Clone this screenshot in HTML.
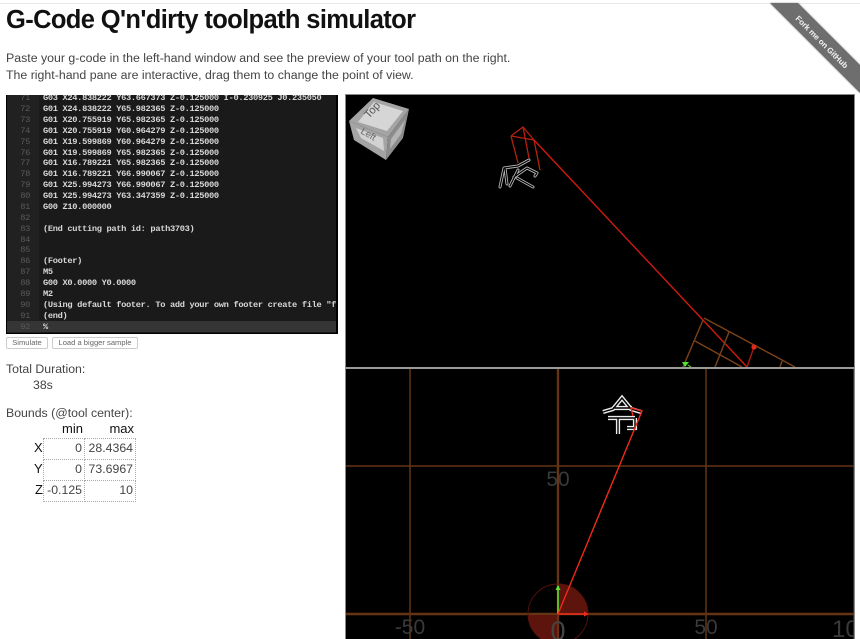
<!DOCTYPE html>
<html><head><meta charset="utf-8"><title>G-Code Q'n'dirty toolpath simulator</title>
<style>
html,body{margin:0;padding:0;background:#fff;width:860px;height:639px;overflow:hidden}
body{position:relative;font-family:"Liberation Sans","Noto Sans CJK JP",sans-serif;color:#333;filter:blur(.3px)}
#top{position:absolute;left:0;top:3px;width:860px;height:1px;background:#e8e8e8}
h1{position:absolute;left:6px;top:5px;margin:0;font-size:25.5px;letter-spacing:-.63px;line-height:30px;font-weight:bold;color:#111;white-space:nowrap}
p{position:absolute;left:6px;top:50px;margin:0;font-size:12.35px;line-height:17px;white-space:nowrap;color:#444}
#ed{position:absolute;left:6px;top:95px;width:332px;height:239px;background:#1a1a1a;overflow:hidden;box-sizing:border-box;border:1px solid #000;border-width:0 2px 1px 1px;font-family:"Liberation Mono",monospace;font-size:8.7px;letter-spacing:-.33px;font-weight:bold}
#gut{position:absolute;left:0;top:0;width:32px;height:239px;background:#212121}
#act{position:absolute;left:0;top:226px;width:330px;height:11px;background:#353535}
.l{position:absolute;left:0;height:11px;line-height:11px;white-space:pre}
.l i{position:absolute;left:0;width:23px;text-align:right;font-style:normal;font-weight:normal;color:#5a5a5a}
.l b{position:absolute;left:36px;color:#d8d8d8;font-weight:bold}
.btn{position:absolute;top:337px;height:12px;box-sizing:border-box;border:1px solid #ccc;border-radius:2px;font-size:7.6px;line-height:10px;text-align:center;color:#666;background:#fff}
.t{position:absolute;white-space:nowrap;font-size:12.3px;line-height:16px;color:#444}
.k{position:absolute;color:#111;font-size:13px;line-height:16px}
.c{position:absolute;box-sizing:border-box;border:1px dotted #aaa;font-size:12.3px;line-height:19px;text-align:right;padding-right:2px;color:#444}
svg{position:absolute;left:0;top:0}
</style></head><body>
<div id="top"></div>
<h1>G-Code Q'n'dirty toolpath simulator</h1>
<p>Paste your g-code in the left-hand window and see the preview of your tool path on the right.<br>The right-hand pane are interactive, drag them to change the point of view.</p>
<div id="ed"><div id="gut"></div><div id="act"></div>
<div class="l" style="top:-2px"><i>71</i><b>G03 X24.838222 Y63.667373 Z-0.125000 I-0.230925 J0.235050</b></div>
<div class="l" style="top:9px"><i>72</i><b>G01 X24.838222 Y65.982365 Z-0.125000</b></div>
<div class="l" style="top:20px"><i>73</i><b>G01 X20.755919 Y65.982365 Z-0.125000</b></div>
<div class="l" style="top:31px"><i>74</i><b>G01 X20.755919 Y60.964279 Z-0.125000</b></div>
<div class="l" style="top:41.6px"><i>75</i><b>G01 X19.599869 Y60.964279 Z-0.125000</b></div>
<div class="l" style="top:52.5px"><i>76</i><b>G01 X19.599869 Y65.982365 Z-0.125000</b></div>
<div class="l" style="top:63.4px"><i>77</i><b>G01 X16.789221 Y65.982365 Z-0.125000</b></div>
<div class="l" style="top:74.2px"><i>78</i><b>G01 X16.789221 Y66.990067 Z-0.125000</b></div>
<div class="l" style="top:85.1px"><i>79</i><b>G01 X25.994273 Y66.990067 Z-0.125000</b></div>
<div class="l" style="top:96px"><i>80</i><b>G01 X25.994273 Y63.347359 Z-0.125000</b></div>
<div class="l" style="top:106.9px"><i>81</i><b>G00 Z10.000000</b></div>
<div class="l" style="top:117.8px"><i>82</i></div>
<div class="l" style="top:128.6px"><i>83</i><b>(End cutting path id: path3703)</b></div>
<div class="l" style="top:139.5px"><i>84</i></div>
<div class="l" style="top:150.4px"><i>85</i></div>
<div class="l" style="top:161.3px"><i>86</i><b>(Footer)</b></div>
<div class="l" style="top:172.2px"><i>87</i><b>M5</b></div>
<div class="l" style="top:183px"><i>88</i><b>G00 X0.0000 Y0.0000</b></div>
<div class="l" style="top:193.9px"><i>89</i><b>M2</b></div>
<div class="l" style="top:204.8px"><i>90</i><b>(Using default footer. To add your own footer create file "f</b></div>
<div class="l" style="top:215.7px"><i>91</i><b>(end)</b></div>
<div class="l" style="top:226.5px"><i>92</i><b>%</b></div>
</div>
<div class="btn" style="left:6px;width:42px">Simulate</div>
<div class="btn" style="left:52px;width:86px">Load a bigger sample</div>
<div class="t" style="left:6px;top:361px">Total Duration:</div>
<div class="t" style="left:33px;top:377px">38s</div>
<div class="t" style="left:6px;top:405px">Bounds (@tool center):</div>
<div class="k" style="left:43px;width:40px;top:421px;text-align:right">min</div>
<div class="k" style="left:84px;width:50px;top:421px;text-align:right">max</div>
<div class="k" style="left:34px;top:440px">X</div>
<div class="k" style="left:34px;top:461px">Y</div>
<div class="k" style="left:35px;top:482px">Z</div>
<div class="c" style="left:43px;top:438px;width:42px;height:22px">0</div>
<div class="c" style="left:84px;top:438px;width:52px;height:22px">28.4364</div>
<div class="c" style="left:43px;top:459px;width:42px;height:22px">0</div>
<div class="c" style="left:84px;top:459px;width:52px;height:22px">73.6967</div>
<div class="c" style="left:43px;top:480px;width:42px;height:22px">-0.125</div>
<div class="c" style="left:84px;top:480px;width:52px;height:22px">10</div>

<svg width="860" height="639" viewBox="0 0 860 639" font-family="Liberation Sans, sans-serif">
<defs><clipPath id="a"><rect x="346" y="95" width="508" height="272"/></clipPath><clipPath id="b"><rect x="346" y="369" width="508" height="270"/></clipPath>
<filter id="s" x="-10%" y="-10%" width="120%" height="120%"><feGaussianBlur stdDeviation="1"/></filter></defs>
<rect x="345" y="94" width="510" height="545" fill="#8a8a8a"/>
<rect x="346" y="95" width="508" height="272" fill="#000"/>
<rect x="346" y="369" width="508" height="270" fill="#000"/>
<g clip-path="url(#a)" fill="none">
<g fill="none" stroke-linejoin="round" stroke-linecap="round">
<g stroke="#b5b5b5" stroke-width="3"><path d="M500 187L504 168L518 166L529 160M505 168L507 184M518 170L510 186M514 177L527 168L537 173L535 176M517 178L533 187"/></g>
<g stroke="#000" stroke-width="1.2"><path d="M500 187L504 168L518 166L529 160M505 168L507 184M518 170L510 186M514 177L527 168L537 173L535 176M517 178L533 187"/></g>
</g>
<g stroke="#b8200f" stroke-width="1.3"><path d="M511 136L523 127L534 140L540 170M511 136L518 163M523 127L529 158M511 136L534 140"/></g>
<path d="M534 140L747 367" stroke="#d01a10" stroke-width="1.4"/>
<g stroke="#7c4218" stroke-width="1.4"><path d="M704 318L795 367M703 320L683 367M695 341L742 367M729 332L715 367M782 361L780 367"/></g>
<path d="M754 347L747 367" stroke="#a81a10" stroke-width="1.4"/>
<circle cx="754" cy="347" r="2.6" fill="#e0281c"/>
<path d="M682 362L689 362L685 367Z" fill="#55e030"/><path d="M688 365L691 367" stroke="#55e030"/>
</g>
<g>
<path d="M373 98L409 109L388 137L349 121Z" fill="#a4a4a4"/>
<path d="M374 102L403 111L387 131L358 122Z" fill="#d6d6d6"/>
<path d="M349 121L388 137L386 160L354 140Z" fill="#a4a4a4"/>
<path d="M356 128L383 138L384 151L361 138Z" fill="#d2d2d2"/>
<path d="M388 137L409 109L403 138L386 160Z" fill="#8c8c8c"/>
<path d="M391 139L405 120L401 134L390 149Z" fill="#b4b4b4"/>
<text transform="translate(369 119) rotate(-48)" font-size="11" fill="#555">Top</text>
<text transform="translate(360 133) rotate(30)" font-size="9.5" fill="#666">Left</text>
</g>
<g clip-path="url(#b)">
<g stroke="#643414" fill="none"><path d="M410 369V639M706 369V639M854 369V639M346 466H854" stroke-width="1.5"/><path d="M558 369V639M346 614H854" stroke-width="2.4"/></g>
<path d="M558 614L558 584A30 30 0 0 1 588 614ZM558 614L558 644A30 30 0 0 1 528 614Z" fill="#5c140c"/>
<path d="M558 584V644M528 614H588" stroke="#643414" stroke-width="2"/>
<circle cx="558" cy="614" r="30" fill="none" stroke="#5a120a" stroke-width=".9"/>
<g font-size="21" fill="#3a3a3a" text-anchor="middle"><text x="558" y="486">50</text><text x="410" y="634">-50</text><text x="706" y="634">50</text><text x="852" y="637" font-size="24">100</text><text x="558" y="640" font-size="27" fill="#444">0</text></g>
<path d="M558 614V586" stroke="#60e030" stroke-width="1.5"/><path d="M555.5 590L558 585L560.5 590Z" fill="#60e030"/>
<path d="M558 614H586" stroke="#ee2c1c" stroke-width="1.5"/><path d="M584 611.5L589 614L584 616.5Z" fill="#ee2c1c"/>
<g fill="none" stroke-linejoin="miter"><g stroke="#ececec" stroke-width="4.2"><path d="M603 412L613 409L622 398L631 409L641 412M613 408H632M608 418H635M618 418V434M635 418V428H627"/></g><g stroke="#000" stroke-width="1.4"><path d="M603 412L613 409L622 398L631 409L641 412M613 408H632M608 418H635M618 418V434M635 418V428H627"/></g></g>
<path d="M558 614L642 411L631 408L633 416" fill="none" stroke="#f02a1a" stroke-width="1.4"/>
</g>
<rect x="346" y="367" width="508" height="2" fill="#9a9a9a"/>
<path d="M770 3H798L860 65V93Z" fill="#000" opacity=".35" filter="url(#s)"/>
<path d="M770 3H798L860 65V93Z" fill="#6e6e6e"/>
<text transform="translate(795 19) rotate(45)" font-size="8" font-weight="bold" letter-spacing="-.1" fill="#f2f2f2">Fork me on GitHub</text>
</svg>
</body></html>
